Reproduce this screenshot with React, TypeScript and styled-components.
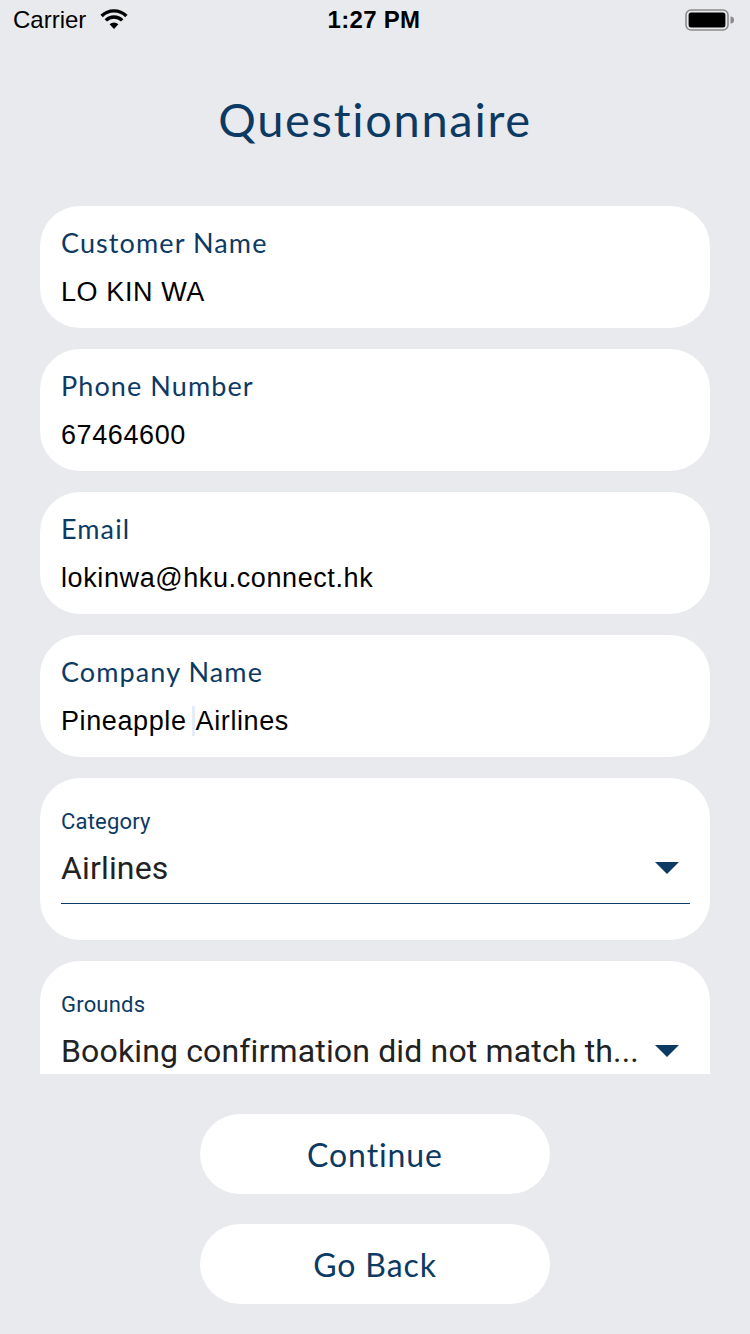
import React, { FunctionComponent } from "react";
import styled, { createGlobalStyle } from "styled-components";

const navy = "#0c3a63";

const GlobalStyle = createGlobalStyle`
  html, body {
    margin: 0;
    padding: 0;
    background: #e9eaee;
  }
  * {
    box-sizing: border-box;
  }
`;

const fields = [
  { label: "Customer Name", value: "LO KIN WA" },
  { label: "Phone Number", value: "67464600" },
  { label: "Email", value: "lokinwa@hku.connect.hk" },
  { label: "Company Name", value: "Pineapple Airlines", caret: 10 },
];

const pickers = [
  { label: "Category", value: "Airlines", underline: true },
  { label: "Grounds", value: "Booking confirmation did not match th...", underline: false },
];

const WifiIcon = () => (
  <svg width="30" height="22" viewBox="0 0 30 22">
    <path d="M15 21 L10.6 16.3 A6.5 6.5 0 0 1 19.4 16.3 Z" fill="#000" />
    <path
      d="M6.8 12.4 A11.5 11.5 0 0 1 23.2 12.4"
      stroke="#000"
      strokeWidth="3.4"
      fill="none"
    />
    <path
      d="M2.6 8 A17.5 17.5 0 0 1 27.4 8"
      stroke="#000"
      strokeWidth="3.4"
      fill="none"
    />
  </svg>
);

const BatteryIcon = () => (
  <svg width="50" height="22" viewBox="0 0 50 22">
    <rect x="1" y="1" width="42" height="20" rx="5" fill="none" stroke="#8a8a8a" strokeWidth="1.6" />
    <rect x="3.6" y="3.6" width="36.8" height="14.8" rx="2.5" fill="#000" />
    <path d="M45.5 7.5 A3.5 3.5 0 0 1 45.5 14.5 Z" fill="#8a8a8a" />
  </svg>
);

const Arrow = () => (
  <svg width="24" height="12" viewBox="0 0 24 12">
    <path d="M0 0 H24 L12 12 Z" fill={navy} />
  </svg>
);

const App: FunctionComponent = () => {
  return (
    <Page>
      <GlobalStyle />
      <StatusBar>
        <Carrier>
          Carrier
          <WifiIcon />
        </Carrier>
        <Clock>1:27 PM</Clock>
        <Battery>
          <BatteryIcon />
        </Battery>
      </StatusBar>

      <Title>Questionnaire</Title>

      <ScrollArea>
        {fields.map((f) => (
          <TextCard key={f.label}>
            <FieldLabel>{f.label}</FieldLabel>
            <FieldValue>
              {f.caret ? (
                <>
                  {f.value.slice(0, f.caret)}
                  <Caret />
                  {f.value.slice(f.caret)}
                </>
              ) : (
                f.value
              )}
            </FieldValue>
          </TextCard>
        ))}
        {pickers.map((p) => (
          <PickerCard key={p.label}>
            <PickerLabel>{p.label}</PickerLabel>
            <PickerRow underline={p.underline}>
              <PickerValue>{p.value}</PickerValue>
              <Arrow />
            </PickerRow>
          </PickerCard>
        ))}
      </ScrollArea>

      <Buttons>
        <Button>Continue</Button>
        <Button>Go Back</Button>
      </Buttons>
    </Page>
  );
};

const Page = styled.div`
  width: 750px;
  height: 1334px;
  background: #e9eaee;
  display: flex;
  flex-direction: column;
  overflow: hidden;
`;

const StatusBar = styled.div`
  height: 40px;
  padding: 0 15px 0 13px;
  display: flex;
  align-items: center;
  justify-content: space-between;
  font-family: "Liberation Sans", Arial, sans-serif;
  color: #000;
`;

const Carrier = styled.div`
  flex: 1;
  display: flex;
  align-items: center;
  gap: 13px;
  font-size: 24px;

  svg {
    margin-top: -2px;
  }
`;

const Clock = styled.div`
  font-size: 24px;
  font-weight: 700;
  letter-spacing: 0.3px;
`;

const Battery = styled.div`
  flex: 1;
  display: flex;
  justify-content: flex-end;
`;

const Title = styled.h1`
  margin: 0;
  height: 166px;
  padding-top: 51px;
  text-align: center;
  font-family: Lato, "Noto Sans", sans-serif;
  font-weight: 400;
  font-size: 47px;
  letter-spacing: 1.7px;
  color: ${navy};
`;

const ScrollArea = styled.div`
  margin: 0 40px;
  height: 868px;
  overflow: hidden;
  display: flex;
  flex-direction: column;
  gap: 21px;
  flex-shrink: 0;
`;

const TextCard = styled.div`
  background: #fff;
  border-radius: 40px;
  height: 122px;
  flex-shrink: 0;
  padding: 21px 21px 0;
  display: flex;
  flex-direction: column;
  gap: 17px;
`;

const FieldLabel = styled.div`
  font-family: Lato, "Noto Sans", sans-serif;
  font-size: 27px;
  line-height: 32px;
  letter-spacing: 1.1px;
  color: ${navy};
`;

const FieldValue = styled.div`
  font-family: "Liberation Sans", Arial, sans-serif;
  font-size: 27px;
  line-height: 32px;
  letter-spacing: 0.6px;
  color: #000;
  white-space: pre;
`;

const Caret = styled.span`
  display: inline-block;
  width: 3px;
  height: 30px;
  vertical-align: -6px;
  background: #e5ecfa;
  margin: 0 1px 0 -3px;
`;

const PickerCard = styled.div`
  background: #fff;
  border-radius: 40px;
  height: 162px;
  flex-shrink: 0;
  padding: 29px 20px 0 21px;
`;

const PickerLabel = styled.div`
  font-family: Roboto, "Noto Sans", sans-serif;
  font-size: 22px;
  line-height: 30px;
  letter-spacing: 0.2px;
  color: ${navy};
`;

const PickerRow = styled.div<{ underline: boolean }>`
  display: flex;
  align-items: center;
  justify-content: space-between;
  height: 67px;
  padding: 0 11px 4px 0;
  border-bottom: 1.5px solid ${(p) => (p.underline ? navy : "transparent")};
`;

const PickerValue = styled.div`
  font-family: Roboto, "Noto Sans", sans-serif;
  font-size: 32px;
  letter-spacing: 0.15px;
  color: #222;
  white-space: nowrap;
  overflow: hidden;
`;

const Buttons = styled.div`
  display: flex;
  flex-direction: column;
  align-items: center;
  gap: 30px;
  padding-top: 40px;
`;

const Button = styled.button`
  width: 350px;
  height: 80px;
  border: none;
  border-radius: 40px;
  background: #fff;
  color: ${navy};
  font-family: Lato, "Noto Sans", sans-serif;
  font-size: 32px;
  letter-spacing: 0.9px;
  padding: 0;
`;

export default App;
